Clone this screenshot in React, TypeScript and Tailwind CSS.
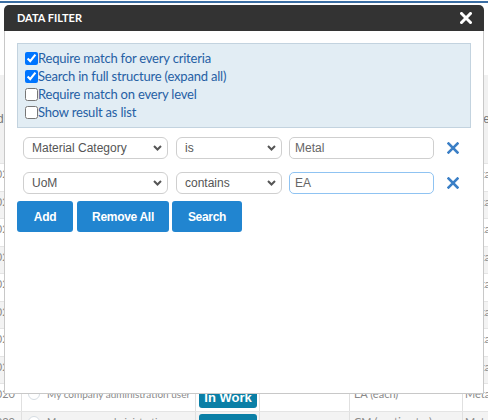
import React from 'react';

type Row = { date: string; owner: string; status: string; uom: string; cat: string };

const rows: Row[] = Array.from({ length: 10 }, (_, i) => ({
  date: '12/10/2020',
  owner: 'My company administration user',
  status: 'In Work',
  uom: i % 2 === 0 ? 'EA (each)' : 'CM (centimeter)',
  cat: 'Metal',
}));

const filters = [
  { field: 'Material Category', op: 'is', value: 'Metal', focused: false },
  { field: 'UoM', op: 'contains', value: 'EA', focused: true },
];

const options = [
  { label: 'Require match for every criteria', checked: true },
  { label: 'Search in full structure (expand all)', checked: true },
  { label: 'Require match on every level', checked: false },
  { label: 'Show result as list', checked: false },
];

const Chevron = () => (
  <svg width="9" height="6" viewBox="0 0 9 6" className="shrink-0">
    <path d="M1 1l3.5 3.5L8 1" fill="none" stroke="#555" strokeWidth="2" />
  </svg>
);

const Cross = ({ color, size, width }: { color: string; size: number; width: number }) => (
  <svg width={size} height={size} viewBox="0 0 12 12">
    <path d="M1.5 1.5l9 9M10.5 1.5l-9 9" stroke={color} strokeWidth={width} strokeLinecap="square" />
  </svg>
);

const Select = ({ text, className }: { text: string; className: string }) => (
  <div
    className={`flex h-[22px] items-center justify-between rounded-[6px] border border-[#cfcfcf] bg-white pl-[8px] pr-[5px] text-[12px] text-[#555] ${className}`}
  >
    <span>{text}</span>
    <Chevron />
  </div>
);

// table rows sitting behind the filter dialog
const BackgroundTable = () => (
  <div className="flex flex-col" style={{ fontFamily: 'Lato, sans-serif' }}>
    {rows.map((r, i) => (
      <div
        key={i}
        className={`flex h-[27.5px] items-center border-t border-[#e4e4e4] text-[11px] text-[#8a8a8a] ${i % 2 ? 'bg-[#f3f3f3]' : 'bg-white'}`}
      >
        <div className="flex h-full w-[22px] shrink-0 items-center justify-end overflow-hidden border-r border-[#e0e0e0] pr-[6px] pb-[6px] whitespace-nowrap">
          <span>{r.date}</span>
        </div>
        <div className="flex h-full w-[174px] shrink-0 items-center gap-[7px] overflow-hidden border-r border-[#e0e0e0] pl-[6px] pb-[6px] whitespace-nowrap">
          <span className="h-[12px] w-[12px] shrink-0 rounded-full border border-[#d6dde3] bg-white" />
          <span className="text-[10px]">{r.owner}</span>
        </div>
        <div className="flex h-full w-[64px] shrink-0 items-center border-r border-[#e0e0e0] pl-[3px]">
          <span
            className="flex h-[22px] w-[58px] items-center justify-center rounded-[3px] bg-[#0a7fa6] text-[13px] font-bold text-white"
            style={{ fontFamily: '"Liberation Sans", Arial, sans-serif' }}
          >
            {r.status}
          </span>
        </div>
        <div className="h-full w-[90px] shrink-0 border-r border-[#e0e0e0]" />
        <div className="flex h-full w-[113px] shrink-0 items-center border-r border-[#e0e0e0] pl-[4px] pb-[6px] whitespace-nowrap">
          {r.uom}
        </div>
        <div className="flex h-full flex-1 items-center pl-[2px] pb-[6px]">{r.cat}</div>
      </div>
    ))}
  </div>
);

export default function App() {
  return (
    <div
      className="relative h-[420px] w-[488px] overflow-hidden bg-white"
      style={{ fontFamily: '"Liberation Sans", Arial, sans-serif' }}
    >
      <div className="mt-[1px] h-[2px] bg-[#3b6ea3]" />
      <div className="h-[72px]" />
      <div className="flex h-[88px] items-center justify-between bg-[#f1f1f1] text-[12px] text-[#777]">
        <span className="-ml-[3px]">d</span>
        <span className="-mr-[2px]">e</span>
      </div>
      <BackgroundTable />

      {/* Data filter dialog */}
      <div className="absolute left-[4px] top-[5px] w-[480px]">
        <div className="flex h-[26px] items-start justify-between rounded-t-[5px] bg-[#333] pl-[13px] pr-[12px]">
          <span
            className="pt-[7px] text-[11px] font-bold leading-none text-white"
            style={{ fontFamily: 'Lato, sans-serif' }}
          >
            DATA FILTER
          </span>
          <span className="pt-[7px]">
            <Cross color="#fff" size={12} width={3} />
          </span>
        </div>

        <div className="h-[363px] border-x border-b border-[#c8c8c8] bg-white px-[12px] pt-[12px]">
          <div
            className="border border-[#c3d3df] bg-[#e2edf4] pl-[7px] pt-[5px] pb-[6px] text-[13px] tracking-[-0.2px] text-[#2660a4]"
            style={{ fontFamily: 'Lato, sans-serif' }}
          >
            {options.map((o) => (
              <label key={o.label} className="flex h-[18px] items-center">
                <input type="checkbox" defaultChecked={o.checked} className="m-0 h-[13px] w-[13px]" />
                <span className="leading-none">{o.label}</span>
              </label>
            ))}
          </div>

          <div className="mt-[9px] flex flex-col gap-[13px] pl-[6px]">
            {filters.map((f) => (
              <div key={f.field} className="flex items-center">
                <Select text={f.field} className="w-[145px]" />
                <Select text={f.op} className="ml-[8px] w-[106px]" />
                <div
                  className={`ml-[7px] flex h-[22px] w-[145px] items-center rounded-[5px] border bg-white pl-[5px] text-[12px] text-[#666] ${f.focused ? 'border-[#8fc3f2]' : 'border-[#cfcfcf]'}`}
                >
                  {f.value}
                </div>
                <span className="ml-[13px] flex items-center">
                  <Cross color="#3b7fc6" size={12} width={2.5} />
                </span>
              </div>
            ))}
          </div>

          <div className="mt-[7px] flex text-[12px] font-bold tracking-[-0.3px] text-white">
            <button className="h-[31px] w-[56px] rounded-[3px] bg-[#2185d0]">Add</button>
            <button className="ml-[4px] h-[31px] w-[92px] rounded-[3px] bg-[#2185d0]">Remove All</button>
            <button className="ml-[3px] h-[31px] w-[70px] rounded-[3px] bg-[#2185d0]">Search</button>
          </div>
        </div>
      </div>
    </div>
  );
}
